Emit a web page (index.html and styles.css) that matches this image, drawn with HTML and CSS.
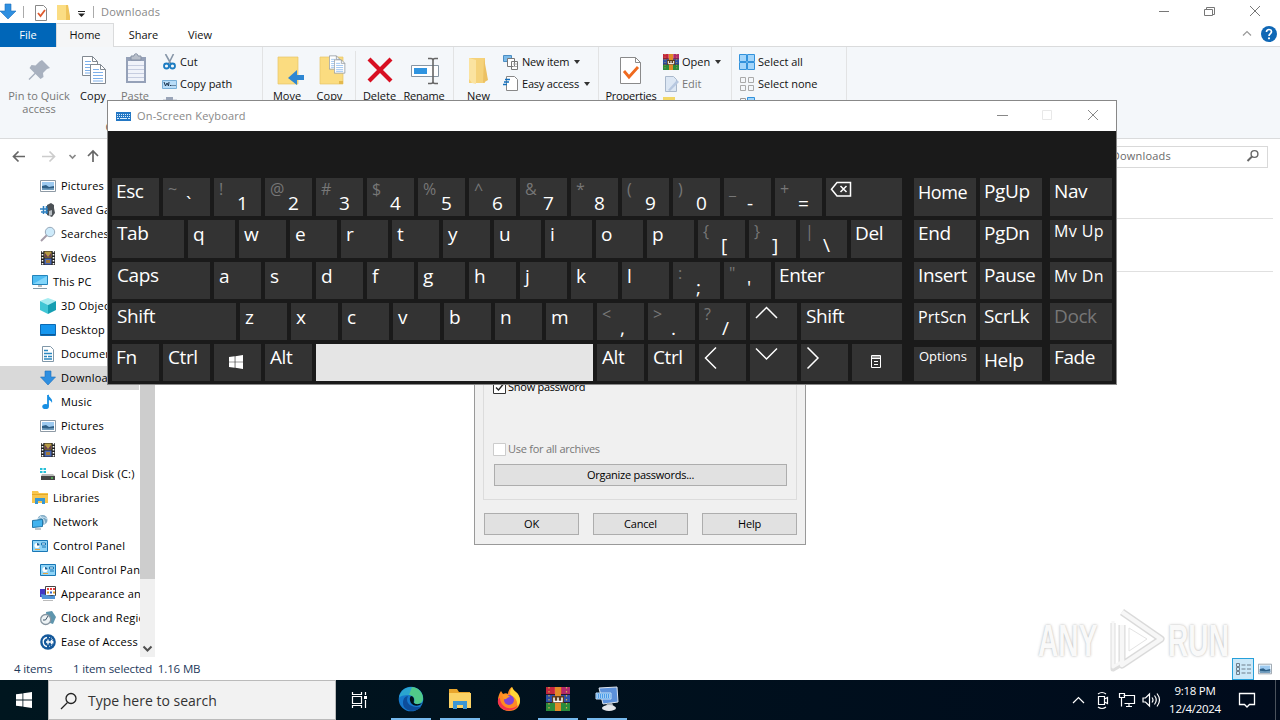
FILE: index.html
```html
<!DOCTYPE html>
<html lang="en">
<head>
<meta charset="utf-8">
<title>Downloads</title>
<link rel="stylesheet" href="styles.css">
</head>
<body>
<svg class="defs" width="0" height="0">
  <defs>
    <symbol id="arrow-down" viewBox="0 0 16 16"><path d="M5 1h6v6h4.500L8 15 .5 7H5z" fill="#2f8fe0" stroke="#1c6fbd" stroke-width=".6"/></symbol>
    <symbol id="picture" viewBox="0 0 16 16"><path d="M.5 2.500h15v11H.5z" fill="#fff" stroke="#8e9aa5"/><path d="M2 4h12v8H2z" fill="#9dcaf0"/><path d="M2 8l4-1 3 2 5-1v4H2z" fill="#2e5f86"/><path d="M2 10l6 .5 6-.5v2H2z" fill="#6f9cbd"/></symbol>
    <symbol id="video" viewBox="0 0 16 16"><path d="M1 1h14v14H1z" fill="#222"/><path d="M4.500 1.500h7v6h-7z" fill="#b69b45"/><path d="M4.500 8.500h7v6h-7z" fill="#4a68b5"/><path d="M5 3l3 4 3-4v4H5z" fill="#6b3d56"/><path d="M6 10h4v3H6z" fill="#a0793b"/><path d="M2.500 1v14M13.500 1v14" stroke="#fff" stroke-width="1.600" stroke-dasharray="1.500 1.500"/></symbol>
    <symbol id="panel" viewBox="0 0 16 16"><path d="M.5 2.500h15v11H.5z" fill="#8fd4f7" stroke="#1977b5"/><circle cx="5" cy="7.500" r="2.600" fill="#fff"/><path d="M5 7.500V4.900a2.600 2.600 0 0 1 2.600 2.600z" fill="#1d5f94"/><path d="M9.500 5h4v2h-4zM10 9h4" stroke="#1977b5" fill="#fff"/><path d="M3 11.500h5" stroke="#e9a33b"/></symbol>
    <symbol id="sheet" viewBox="0 0 30 30"><path d="M.5.5h10l5 5v14H.5z" fill="#fff" stroke="#818991"/><path d="M10.500.5v5h5" fill="none" stroke="#818991"/><path d="M3 5.500h6M3 8.500h10M3 11.500h10M3 14.500h10M3 17h10" stroke="#7db0ea"/></symbol>
    <symbol id="books" viewBox="0 0 24 24"><path d="M0 0h8v8H0z" fill="#c3263e"/><path d="M8 0h8v8H8z" fill="#d2334a"/><path d="M16 0h8v8h-8z" fill="#b02a6d"/><path d="M0 8h24v8H0z" fill="#2d4fa5"/><path d="M0 16h24v8H0z" fill="#2b8b3c"/><path d="M0 7.500h24M0 15.500h24" stroke="#2b1a2c"/><path d="M3 0v24M20.500 0v24" stroke="#d9b04a" stroke-width="1.200" stroke-dasharray="1.500 2.500"/><path d="M9 0h6v24H9z" fill="#e08b28"/><path d="M6 9h12v7H6z" fill="#5e3b1c"/><path d="M8 10.500v4h8v-4M12 10.500v4" stroke="#fff" stroke-width="1.500" fill="none"/></symbol>
    <symbol id="win" viewBox="0 0 16 16"><path d="M0 2.300l6.500-.9v6.200H0zM7.300 1.300L16 0v7.600H7.300zM0 8.400h6.500v6.200L0 13.700zM7.300 8.400H16V16l-8.700-1.300z" fill="#fff"/></symbol>
  </defs>
</svg>

<div class="screen">
  <main class="explorer">
    <header class="titlebar">
      <svg class="quick" width="95" height="22" viewBox="0 0 95 22"><path d="M5 3h6v7h5l-8 8-8-8h5z" fill="#2f8fe0" stroke="#1c6fbd" stroke-width=".6"/><path d="M23.500 5v12" stroke="#aaa"/><path d="M35.500 4.500h8l3 3v12h-11z" fill="#fff" stroke="#888"/><path d="M38 12l2.500 3 4.500-6" fill="none" stroke="#df5a2d" stroke-width="1.800"/><path d="M57 4h11v15H57z" fill="#fbdd83"/><path d="M66 4h2l2 11v4h-4z" fill="#efc45b"/><path d="M78 10.500h7" stroke="#222"/><path d="M78 12.500h7l-3.500 3.500z" fill="#222"/><path d="M93.500 5v12" stroke="#aaa"/></svg>
      <span class="title">Downloads</span>
      <svg class="controls" width="110" height="22" viewBox="0 0 110 22" fill="none" stroke="#777"><path d="M9 10.500h10M56.500 8.500v-2h8v7h-2M54.500 8.500h8v6h-8zM100 5l10 10M110 5l-10 10"/></svg>
    </header>
    <nav class="tabs">
      <span class="tab file">File</span><span class="tab active">Home</span><span class="tab share">Share</span><span class="tab view">View</span>
      <svg class="help" width="36" height="20" viewBox="0 0 36 20"><path d="M1 11.500l4-4 4 4" fill="none" stroke="#999" stroke-width="1.200"/><circle cx="27" cy="10" r="8" fill="#0f67b5"/><path d="M24.500 8c0-3.500 5-3 5-.3 0 1.800-2.500 2-2.500 4.300" fill="none" stroke="#fff" stroke-width="1.700"/><circle cx="27" cy="14.300" r="1.100" fill="#fff"/></svg>
    </nav>
    <section class="ribbon">
      <div class="group clipboard">
        <div class="tools">
          <div class="big pin dim"><svg width="32" height="32" viewBox="0 0 32 32"><path d="M18 7l8 8-3 1-4 4 .5 4-3 2-5-5-6 6-1-1 6-6-5-5 2-3 4 .5 4-4z" fill="#a8b1bf"/></svg><span>Pin to Quick<br>access</span></div>
          <div class="big copy"><svg width="32" height="32" viewBox="0 0 32 32"><use href="#sheet" x="4" y="3" width="30" height="30"/><use href="#sheet" x="12" y="11" width="30" height="30"/></svg><span>Copy</span></div>
          <div class="big paste dim"><svg width="32" height="32" viewBox="0 0 32 32"><path d="M6 4h20v26H6z" fill="#95a1b8"/><path d="M8 8h16v20H8z" fill="#f0f3fa"/><path d="M11 3h3c0-3 4-3 4 0h3v4H11z" fill="#b7bec9" stroke="#8792a5"/><path d="M8 12.500h16M8 16.500h16M8 20.500h16M8 24.500h16" stroke="#c6cde0"/></svg><span>Paste</span></div>
          <ul class="small clip-list">
            <li><svg width="16" height="16" viewBox="0 0 16 16"><path d="M3.500 0l5.500 10M11.500 0L6.500 10" stroke="#8796a8" stroke-width="1.600"/><circle cx="4.500" cy="12" r="2.500" fill="none" stroke="#1c7cc2" stroke-width="1.800"/><circle cx="10.500" cy="12" r="2.500" fill="none" stroke="#1c7cc2" stroke-width="1.800"/></svg>Cut</li>
            <li><svg width="16" height="16" viewBox="0 0 16 16"><path d="M.5 4.500h14v8H.5z" fill="#b8dcf8" stroke="#79afd8"/><path d="M2 6l1.500 4L5 7l1.500 3L7 6M8 9.500h1.500M10.500 9.500h1M12.500 9.500h1" stroke="#1c3550" fill="none"/></svg>Copy path</li>
            <li><svg width="16" height="16" viewBox="0 0 16 16"><path d="M1 2h14v12H1z" fill="#d5d9e1"/><path d="M4 0h7v3H4z" fill="#9aa5b8"/></svg></li>
          </ul>
        </div>
        <span class="caption">Clipboard</span>
      </div>
      <div class="group organize">
        <div class="tools">
          <div class="big move"><svg width="32" height="32" viewBox="0 0 32 32"><path d="M6 4h20v27H6z" fill="#fbdc80" stroke="#e7c467" stroke-width=".7"/><path d="M32 22h-7v-5l-9 8 9 7v-5h7z" fill="#2e87d3"/></svg><span>Move</span></div>
          <div class="big copyto"><svg width="32" height="32" viewBox="0 0 32 32"><path d="M5 4h23v27H5z" fill="#fbdc80" stroke="#e7c467" stroke-width=".7"/><path d="M24 28h4v3h-4z" fill="#e4b94e"/><svg x="14" y="2" width="22" height="23"><use href="#sheet" width="21" height="22"/><use href="#sheet" x="5" y="4" width="21" height="22"/></svg></svg><span>Copy</span></div>
          <i class="line"></i>
          <div class="big delete"><svg width="32" height="32" viewBox="0 0 32 32"><path d="M4 6l22 22M26 6L4 28" stroke="#d80f22" stroke-width="4.200"/></svg><span>Delete</span></div>
          <div class="big rename"><svg width="32" height="32" viewBox="0 0 32 32"><path d="M2.500 12.500h27v11h-27z" fill="#fff" stroke="#8795a3"/><path d="M5 15h13v6H5z" fill="#2f94e0"/><path d="M19 5.500h3q2 0 2 2v21q0 2-2 2h-3M29 5.500h-3q-2 0-2 2M29 30.500h-3q-2 0-2-2" fill="none" stroke="#666" stroke-width="1.600"/></svg><span>Rename</span></div>
        </div>
      </div>
      <div class="group new">
        <div class="tools">
          <div class="big folder"><svg width="32" height="32" viewBox="0 0 32 32"><path d="M5 5h16v25H5z" fill="#f5d27a"/><path d="M5 5l7 2v24l-4-1-3-4z" fill="#fbe3a0"/><path d="M20 5l4 22-5 3z" fill="#ecc163"/></svg><span>New</span></div>
          <ul class="small new-list">
            <li><svg width="16" height="16" viewBox="0 0 16 16"><path d="M.5 1.500h8v6h-8z" fill="#7cbbe9" stroke="#4c8ec4"/><path d="M4.500 4.500h7v8h-7zM8.500 7.500h6v8h-6z" fill="#fff" stroke="#777"/><path d="M10 10h4M10 12.500h4" stroke="#aaa"/></svg>New item<b class="caret"></b></li>
            <li><svg width="16" height="16" viewBox="0 0 16 16"><path d="M3.500.5h8l3 3v11h-11z" fill="#fff" stroke="#888"/><path d="M2 3.500h5M1 6h5M0 8.500h4" stroke="#126fbd" stroke-width="1.500"/></svg>Easy access<b class="caret"></b></li>
          </ul>
        </div>
      </div>
      <div class="group open">
        <div class="tools">
          <div class="big props"><svg width="32" height="32" viewBox="0 0 32 32"><path d="M4.500 4.500h15l5 5v21h-20z" fill="#fff" stroke="#8a8a8a"/><path d="M19.500 4.500v5h5" fill="none" stroke="#8a8a8a"/><path d="M8 18l5 6 9-10" fill="none" stroke="#ef6a1f" stroke-width="2.800"/></svg><span>Properties</span></div>
          <ul class="small open-list">
            <li><svg width="16" height="16"><use href="#books" width="16" height="16"/></svg>Open<b class="caret"></b></li>
            <li class="dim"><svg width="16" height="16" viewBox="0 0 16 16"><path d="M2.500.5h8l3 3v12h-11z" fill="#dce7f4" stroke="#a9b8cb"/><path d="M5 14l9-10 2 2-9 9z" fill="#b7c8e0"/></svg>Edit</li>
            <li><svg width="16" height="16" viewBox="0 0 16 16"><path d="M0 0h12v12H0z" fill="#f2d766"/></svg></li>
          </ul>
        </div>
      </div>
      <div class="group select">
        <ul class="small">
          <li><svg width="16" height="16" viewBox="0 0 16 16"><path d="M.5.5h7v7h-7zM8.500.5h7v7h-7zM.5 8.500h7v7h-7zM8.500 8.500h7v7h-7z" fill="#a3d5fa" stroke="#3292dc"/></svg>Select all</li>
          <li><svg width="16" height="16" viewBox="0 0 16 16" fill="none" stroke="#aaa"><path d="M1.500 1.500h5v5h-5zM9.500 1.500h5v5h-5zM1.500 9.500h5v5h-5zM9.500 9.500h5v5h-5z"/></svg>Select none</li>
          <li><svg width="16" height="16" viewBox="0 0 16 16"><path d="M1.500 1.500h5v5h-5z" fill="none" stroke="#999"/><path d="M8.500.5h7v7h-7z" fill="#a3d5fa" stroke="#3292dc"/></svg></li>
        </ul>
      </div>
    </section>
    <div class="navbar">
      <svg width="107" height="32" viewBox="0 0 107 32" fill="none" stroke-width="1.700"><path d="M25 15.500H13.500M18.500 10.500l-5 5 5 5" stroke="#666"/><path d="M42 15.500h12M49.500 10.500l5 5-5 5" stroke="#ccc"/><path d="M69.500 14l3 3 3-3" stroke="#888"/><path d="M93 21V10M88 15l5-5 5 5" stroke="#666"/></svg>
      <div class="address"></div>
      <div class="search"><span>Search Downloads</span><svg width="14" height="14" viewBox="0 0 14 14" fill="none" stroke="#666"><circle cx="8.500" cy="5" r="3.400" stroke-width="1.400"/><path d="M6 7.500L1.500 12" stroke-width="2"/></svg></div>
    </div>
    <div class="body">
      <aside class="tree">
        <ul>
          <li class="sub"><svg><use href="#picture"/></svg>Pictures</li>
          <li class="sub"><svg viewBox="0 0 16 16"><path d="M7 3l4-2 3 2v3l1 5-3 4-5-2z" fill="#4c5156"/><path d="M9 9l3-1v5l-3 1z" fill="#b8bec3"/><path d="M0 7h8M1 10h7M3.500 4v8M6.500 4v8" stroke="#2c7fc0" stroke-width="1.500"/></svg>Saved Games</li>
          <li class="sub"><svg viewBox="0 0 16 16"><path d="M1 15l6-6" stroke="#a59ba8" stroke-width="2"/><circle cx="10" cy="6" r="4.700" fill="#cdeafa" stroke="#98a9ba"/></svg>Searches</li>
          <li class="sub"><svg><use href="#video"/></svg>Videos</li>
          <li><svg viewBox="0 0 16 16"><path d="M.5 1.500h15v9H.5z" fill="#4fbcf1" stroke="#2384bb"/><path d="M1 10l14-8v8z" fill="#83d6fa"/><path d="M6 11h4v2H6z" fill="#bbb"/><path d="M1 14.500h14" stroke="#8398a5"/></svg>This PC</li>
          <li class="sub"><svg viewBox="0 0 16 16"><path d="M8 0l8 3-8 4-8-4z" fill="#a5ecf1"/><path d="M0 3l8 4v9l-8-4z" fill="#41c6d5"/><path d="M16 3L8 7v9l8-4z" fill="#149eb2"/></svg>3D Objects</li>
          <li class="sub"><svg viewBox="0 0 16 16"><path d="M.5 2.500h15v11H.5z" fill="#1596ee" stroke="#0c6ab3"/><path d="M1 12.500h14" stroke="#0d5a97"/></svg>Desktop</li>
          <li class="sub"><svg viewBox="0 0 16 16"><path d="M2.500.5h8l3 3v12h-11z" fill="#fff" stroke="#8097a8"/><path d="M4 4.500h4M4 7.500h8M4 10.500h3M8 10.500h4M4 13h8" stroke="#2b87bf" stroke-width="1.400"/></svg>Documents</li>
          <li class="sub selected"><svg><use href="#arrow-down"/></svg>Downloads</li>
          <li class="sub"><svg viewBox="0 0 16 16"><path d="M8 1v11" stroke="#188fe3" stroke-width="1.800"/><ellipse cx="5.600" cy="12.500" rx="3.300" ry="2.600" fill="#188fe3"/><path d="M8 0c1 4 5 4 4 9-1-3-4-3-4-4z" fill="#188fe3"/></svg>Music</li>
          <li class="sub"><svg><use href="#picture"/></svg>Pictures</li>
          <li class="sub"><svg><use href="#video"/></svg>Videos</li>
          <li class="sub"><svg viewBox="0 0 16 16"><path d="M0 2h2.500v2H0zM3.500 2H6v2H3.500zM0 5h2.500v2H0zM3.500 5H6v2H3.500z" fill="#26c0d8"/><path d="M2 8h11l2 2H1z" fill="#bbb"/><path d="M1 10h14v4H1z" fill="#444"/><path d="M11 12h2" stroke="#6f6"/></svg>Local Disk (C:)</li>
          <li><svg viewBox="0 0 16 16"><path d="M0 1h6l1 2h9v10H0z" fill="#f8c64d"/><path d="M3 14V8h10v6h-3v-3H6v3z" fill="#3897d3"/><path d="M0 4.500h16" stroke="#e5a927"/></svg>Libraries</li>
          <li><svg viewBox="0 0 16 16"><circle cx="10.500" cy="6" r="5" fill="#7faac5"/><path d="M6 5q4-4 9 0M8 2q5 3 5 8" stroke="#cde5f3" fill="none"/><path d="M.5 6.500l10-1v7l-10 1z" fill="#43b3ee" stroke="#2477a8"/><path d="M3 15h6" stroke="#7b8b96"/></svg>Network</li>
          <li><svg><use href="#panel"/></svg>Control Panel</li>
          <li class="sub"><svg><use href="#panel"/></svg>All Control Panel Items</li>
          <li class="sub"><svg viewBox="0 0 16 16"><path d="M0 3h8v8H0z" fill="#4338c4"/><path d="M5.500.5h10v9h-10z" fill="#fff" stroke="#444"/><path d="M7 3h2M10 3h2M13 3h2" stroke="#e63c3c" stroke-width="2"/><path d="M7 6.500h2M13 6.500h2" stroke="#e5a32d" stroke-width="2"/><path d="M10 6.500h2" stroke="#3864cb" stroke-width="2"/><path d="M1 8l11 2 3-1v4H2z" fill="#4f93d7"/><path d="M3 14.500h10" stroke="#bbb"/></svg>Appearance and Personalization</li>
          <li class="sub"><svg viewBox="0 0 16 16"><path d="M6 2l6-1 4 6-3 7-6-2z" fill="#5e95ad"/><circle cx="5.700" cy="9.500" r="5" fill="#eef3f5" stroke="#8695a0" stroke-width="1.300"/><path d="M8 6L5.500 10H3" stroke="#3f566a" fill="none"/></svg>Clock and Region</li>
          <li class="sub"><svg viewBox="0 0 16 16"><circle cx="8" cy="8" r="7.800" fill="#14589b"/><path d="M7 3.500C1 5 3 12 7 12.500M6 8h7M8 5.500v5M11 6l2 2-2 2" stroke="#fff" fill="none" stroke-width="1.300"/><path d="M9 12.500q3-1 4-3M9 3.500q3 0 4 3" stroke="#fff" fill="none" stroke-dasharray="1 1"/></svg>Ease of Access</li>
        </ul>
        <div class="scroll"><div class="thumb"></div><svg width="15" height="16" viewBox="0 0 15 16"><path d="M3.500 5.500l4 4 4-4" fill="none" stroke="#505050" stroke-width="2"/></svg></div>
      </aside>
      <section class="files"><div class="rule"></div><div class="rule second"></div></section>
    </div>
    <footer class="status">
      <span class="count">4 items</span><span class="picked">1 item selected&nbsp; 1.16 MB</span>
      <div class="views"><i class="mode on"><svg width="20" height="20" viewBox="0 0 20 20" stroke="#6f7f8c" fill="none"><path d="M3.500 4.500h3v3h-3zM3.500 8.500h3v3h-3zM3.500 12.500h3v3h-3zM8.500 6h4M14 6h4M8.500 10h4M14 10h4M8.500 14h4M14 14h4"/></svg></i><svg class="mode" width="15" height="16"><use href="#picture" width="14" height="16"/></svg></div>
    </footer>
  </main>

  <section class="dialog">
    <div class="frame">
      <label class="check show"><svg width="13" height="13" viewBox="0 0 13 13"><path d="M.5.5h12v12H.5z" fill="#fff" stroke="#333"/><path d="M3 6.500L5.500 9 10 3.500" fill="none" stroke="#222" stroke-width="1.300"/></svg>Show password</label>
      <label class="check all"><svg width="13" height="13" viewBox="0 0 13 13"><path d="M.5.5h12v12H.5z" fill="#fff" stroke="#ccc"/></svg>Use for all archives</label>
      <div class="btn">Organize passwords...</div>
    </div>
    <div class="actions"><div class="btn">OK</div><div class="btn">Cancel</div><div class="btn">Help</div></div>
  </section>

  <section class="osk">
    <header class="osk-title">
      <svg width="15" height="9" viewBox="0 0 15 9"><path d="M0 0h15v9H0z" fill="#2377c4"/><path d="M1 2.500h13M1 4.500h13" stroke="#d9ecfb" stroke-dasharray="1 1"/><path d="M1 6.500h2M4 6.500h7M12 6.500h2" stroke="#d9ecfb"/></svg>
      <span>On-Screen Keyboard</span>
      <svg class="osk-controls" width="102" height="12" viewBox="0 0 102 12" fill="none"><path d="M0 5.500h11" stroke="#888"/><path d="M45.500.5h9v9h-9z" stroke="#e8e8e8"/><path d="M91 0l10 10M101 0L91 10" stroke="#888"/></svg>
    </header>
    <div class="keys">
      <div class="board">
        <div class="row">
          <div class="key">Esc</div>
          <div class="key dual"><i>~</i><b>`</b></div><div class="key dual"><i>!</i><b>1</b></div><div class="key dual"><i>@</i><b>2</b></div><div class="key dual"><i>#</i><b>3</b></div><div class="key dual"><i>$</i><b>4</b></div><div class="key dual"><i>%</i><b>5</b></div><div class="key dual"><i>^</i><b>6</b></div><div class="key dual"><i>&amp;</i><b>7</b></div><div class="key dual"><i>*</i><b>8</b></div><div class="key dual"><i>(</i><b>9</b></div><div class="key dual"><i>)</i><b>0</b></div><div class="key dual"><i>_</i><b>-</b></div><div class="key dual"><i>+</i><b>=</b></div>
          <div class="key rest"><svg width="22" height="22" viewBox="0 0 22 22" fill="none" stroke="#fff" stroke-width="1.500"><path d="M7 4.500h13.500v13.500H7L1.500 11.200zM10.500 8l6 6M16.500 8l-6 6"/></svg></div>
        </div>
        <div class="row">
          <div class="key word tabkey">Tab</div><div class="key letter">q</div><div class="key letter">w</div><div class="key letter">e</div><div class="key letter">r</div><div class="key letter">t</div><div class="key letter">y</div><div class="key letter">u</div><div class="key letter">i</div><div class="key letter">o</div><div class="key letter">p</div><div class="key dual"><i>{</i><b>[</b></div><div class="key dual"><i>}</i><b>]</b></div><div class="key dual"><i>|</i><b>\</b></div><div class="key rest">Del</div>
        </div>
        <div class="row short">
          <div class="key word caps">Caps</div><div class="key letter">a</div><div class="key letter">s</div><div class="key letter">d</div><div class="key letter">f</div><div class="key letter">g</div><div class="key letter">h</div><div class="key letter">j</div><div class="key letter">k</div><div class="key letter">l</div><div class="key dual"><i>:</i><b>;</b></div><div class="key dual"><i>"</i><b>'</b></div><div class="key rest">Enter</div>
        </div>
        <div class="row short">
          <div class="key word shift">Shift</div><div class="key letter">z</div><div class="key letter">x</div><div class="key letter">c</div><div class="key letter">v</div><div class="key letter">b</div><div class="key letter">n</div><div class="key letter">m</div><div class="key dual"><i>&lt;</i><b>,</b></div><div class="key dual"><i>&gt;</i><b>.</b></div><div class="key dual"><i>?</i><b>/</b></div>
          <div class="key"><svg width="24" height="22" viewBox="0 0 24 22" fill="none" stroke="#fff" stroke-width="1.500"><path d="M2 15L12.500 4.500 23 15"/></svg></div><div class="key word rest">Shift</div>
        </div>
        <div class="row short">
          <div class="key">Fn</div><div class="key word">Ctrl</div><div class="key glyph"><svg width="14" height="14"><use href="#win"/></svg></div><div class="key word">Alt</div><div class="key space"></div><div class="key word">Alt</div><div class="key word">Ctrl</div>
          <div class="key"><svg width="24" height="28" viewBox="0 0 24 28" fill="none" stroke="#fff" stroke-width="1.500"><path d="M13 3.500L2.500 14 13 24.500"/></svg></div><div class="key"><svg width="24" height="22" viewBox="0 0 24 22" fill="none" stroke="#fff" stroke-width="1.500"><path d="M2 4.500L12.500 15 23 4.500"/></svg></div><div class="key"><svg width="24" height="28" viewBox="0 0 24 28" fill="none" stroke="#fff" stroke-width="1.500"><path d="M2.500 3.500L13 14 2.500 24.500"/></svg></div>
          <div class="key rest glyph"><svg width="10" height="13" viewBox="0 0 10 13" fill="none" stroke="#fff"><path d="M.5.5h9v12h-9zM.5 2h9M.5 3.500h9M3 6.500h4M3 9.500h4"/></svg></div>
        </div>
      </div>
      <div class="side">
        <div class="key home">Home</div><div class="key">PgUp</div><div class="key">Nav</div>
        <div class="key">End</div><div class="key">PgDn</div><div class="key mv">Mv Up</div>
        <div class="key">Insert</div><div class="key">Pause</div><div class="key mv dn">Mv Dn</div>
        <div class="key prt">PrtScn</div><div class="key scr">ScrLk</div><div class="key dock">Dock</div>
        <div class="key low options">Options</div><div class="key low">Help</div><div class="key">Fade</div>
      </div>
    </div>
  </section>

  <div class="watermark"><span>ANY</span><svg width="64" height="68" viewBox="0 0 64 68"><g fill="none" stroke-linejoin="round"><path d="M18 5L57 32 18 58V18" stroke="#d2d2d2" stroke-width="7"/><path d="M9 16V62l12-7" stroke="#d6d6d6" stroke-width="5"/><path d="M18 5L57 32 18 58V18" stroke="#f6f6f6" stroke-width="4.500"/><path d="M9 14V60l10-6" stroke="#f6f6f6" stroke-width="3"/><path d="M25 21v23l18-12z" stroke="#ddd"/></g></svg><span>RUN</span></div>

  <footer class="taskbar">
    <div class="start"><svg width="16" height="16"><use href="#win"/></svg></div>
    <div class="find"><svg width="18" height="18" viewBox="0 0 18 18" fill="none" stroke="#222" stroke-width="1.300"><circle cx="11" cy="6.500" r="5"/><path d="M7.500 10.500L1 17"/></svg><span>Type here to search</span></div>
    <div class="app task"><svg width="18" height="18" viewBox="0 0 18 18" fill="none" stroke="#fff" stroke-width="1.200"><path d="M1.500 1v2.500h9V1M1.500 5.500h9v7h-9zM1.500 17v-2.500h9V17M14.500 1v3M14.500 9v8"/><path d="M13 5h3v3h-3z" fill="#fff" stroke="none"/></svg></div>
    <div class="app run"><svg width="26" height="26" viewBox="0 0 26 26"><circle cx="13" cy="13" r="12.300" fill="#1678cc"/><path d="M1 12C3-2 23-3 25 12c.5 7-7 7-9 5 2-4-1-8-5-8-5 0-9 1-10 3z" fill="#2aa5d0"/><path d="M14 1c8 1 11 7 11 11 0 6-6 7-9 5 2-4-1-8-5-8z" fill="#5bd377" opacity=".8"/><path d="M10 10c-3 6 1 12 13 11-5 6-18 5-18-4 0-4 2-7 5-7z" fill="#0d4d9b"/><path d="M13 10c5 1 2 6 3 7 2 2 6 1 8 0-3 4-9 3-11 0-1-2-2-5 0-7z" fill="#001018"/></svg></div>
    <div class="app run"><svg width="24" height="24" viewBox="0 0 24 24"><path d="M1 2h8l2 3h11v16H1z" fill="#e9a52c"/><path d="M1 6h22v15H1z" fill="#fbd265"/><path d="M5 22v-8h14v8h-4v-4H9v4z" fill="#3b96d4"/></svg></div>
    <div class="app"><svg width="24" height="26" viewBox="0 0 24 26"><path d="M4 5l2 3c2-1 4-1 5 0 0-3 2-6 4-7 1 3 3 4 5 6 6 7 3 18-8 18S-2 14 4 5z" fill="#ff8a22"/><path d="M15 1c1 3 3 4 5 6 4 5 4 10 0 14 1-5-1-9-5-11-3-2-2-6 0-9z" fill="#ffd637"/><path d="M3 12c0 9 11 14 18 7-3 7-17 8-20-2-.5-2 0-5 2-5z" fill="#f5334e"/><circle cx="12" cy="14" r="5" fill="#8043d6"/><path d="M5 9c4-2 6 0 8 2-3 0-3 3-6 2z" fill="#ff9927"/></svg></div>
    <div class="app run"><svg width="24" height="24"><use href="#books"/></svg></div>
    <div class="app run"><svg width="24" height="26" viewBox="0 0 24 26"><path d="M4 2l18-1 1 15-15 2z" fill="#5c91da" stroke="#e0e7f0"/><path d="M1 7h15v6H1z" fill="#4b9ce8" stroke="#c5e0f8"/><path d="M2 9h13M2 11h13" stroke="#fff" stroke-dasharray="1 1"/><path d="M12 17h5l2 4h-8z" fill="#aab1b8"/><ellipse cx="14" cy="22" rx="7" ry="3" fill="#e2e5e9"/></svg></div>
    <div class="tray">
      <svg width="90" height="20" viewBox="0 0 90 20" fill="none" stroke="#fff" stroke-width="1.200"><path d="M2 13l5.500-5.500L13 13M27.500 6.500h6v8h-6zM33.500 9l3-1.500v6l-3-1.500M27 4q4-3 8 0M27 17q4 3 8 0"/><path d="M52.500 5.500h11v8h-10M55 16.500h6M58 13.500v3M48.500 3.500h5v4h-5zM50.500 7.500v9"/><path d="M72 8h2.500L78.500 4v12l-4-4H72zM81 7.500q2 2.500 0 5M83.500 5.500q3.500 4.500 0 9M86 3.500q5 6.500 0 13"/></svg>
      <div class="clock">9:18 PM<br>12/4/2024</div>
      <svg width="18" height="18" viewBox="0 0 18 18" fill="none" stroke="#fff" stroke-width="1.300"><path d="M1.500 2.500h15v11h-5L9 16l-2.500-2.500h-5z"/></svg>
      <i class="peek"></i>
    </div>
  </footer>
</div>
</body>
</html>
```
FILE: styles.css
```css
* { box-sizing: border-box; }
body { margin: 0; font: 11px/14px "Open Sans", "Noto Sans", sans-serif; color: #111; background: #fff; }
ul { list-style: none; margin: 0; padding: 0; }
svg { display: block; flex: none; }
i, b { font-style: normal; font-weight: 400; }
.defs { position: absolute; }
.screen { position: relative; width: 1280px; height: 720px; overflow: hidden; display: flex; flex-direction: column; }

.explorer { height: 680px; display: flex; flex-direction: column; }
.titlebar { height: 23px; display: flex; align-items: center; padding-right: 20px; }
.title { margin-left: 6px; color: #888; letter-spacing: .2px; }
.controls { margin-left: auto; overflow: visible; }
.tabs { height: 24px; display: flex; align-items: stretch; border-bottom: 1px solid #dadbdc; }
.tab { text-align: center; line-height: 24px; margin-bottom: -1px; }
.file { width: 56px; background: #0066b8; color: #fff; }
.active { width: 58px; background: #f5f6f7; border: solid #dadbdc; border-width: 1px 1px 0; line-height: 22px; }
.share { width: 59px; }
.view { width: 54px; }
.help { margin: 1px 0 0 auto; width: 38px; padding-right: 2px; }

.ribbon { height: 92px; display: flex; background: #f4f7fa; border-bottom: 1px solid #dadbdc; }
.group { display: flex; flex-direction: column; border-right: 1px solid #e2e3e4; padding-top: 4px; margin-bottom: 4px; }
.clipboard { width: 263px; }
.organize { width: 191px; padding-left: 3px; }
.new { width: 145px; }
.open { width: 133px; }
.select { width: 115px; padding-left: 7px; }
.tools { display: flex; height: 72px; }
.caption { text-align: center; color: #555; letter-spacing: .1px; }
.big { display: flex; flex-direction: column; align-items: center; text-align: center; white-space: nowrap; gap: 4px; line-height: 13px; }
.big > svg { margin: 2px 0 0 2px; }
.dim { color: #777; }
.pin { width: 78px; }
.copy { width: 30px; }
.paste { width: 54px; }
.move { width: 42px; }
.copyto { width: 43px; }
.line { width: 1px; margin-left: 4px; background: #e2e3e4; }
.delete { width: 47px; }
.rename { width: 42px; letter-spacing: -.2px; margin-right: 1px; }
.folder { width: 49px; }
.props { width: 64px; letter-spacing: -.2px; }
.small li { height: 22px; display: flex; align-items: center; gap: 3px; white-space: nowrap; }
.small li:nth-child(3) svg { margin-top: -2px; }
.clip-list li { gap: 2px; }
.new-list li { letter-spacing: -.2px; }
.caret { border: solid transparent; border-width: 4px 3.500px 0; border-top-color: #333; margin-left: 2px; }

.navbar { height: 35px; display: flex; align-items: center; }
.address { width: 980px; height: 23px; border: 1px solid #d9d9d9; }
.search { width: 193px; margin-left: -12px; height: 22px; border: 1px solid #d9d9d9; display: flex; align-items: center; justify-content: space-between; padding: 0 7px 2px 0; color: #6a6a6a; }
.search span { width: 95px; direction: rtl; white-space: nowrap; letter-spacing: .2px; }
.body { height: 483px; display: flex; color: #000; }
.tree { width: 156px; display: flex; }
.tree ul { width: 140px; overflow: hidden; letter-spacing: .22px; }
.tree li { height: 24px; padding-left: 32px; display: flex; align-items: center; gap: 5px; white-space: nowrap; }
.tree li.sub { padding-left: 40px; }
.tree li svg { width: 16px; height: 16px; }
.tree .selected { background: #d9d9d9; width: 139px; }
.scroll { width: 15px; background: #f0f0f0; display: flex; flex-direction: column; justify-content: space-between; }
.thumb { height: 405px; background: #cdcdcd; }
.files { flex: 1; padding: 44px 7px 0 0; }
.rule { border-top: 1px solid #e0e0e0; }
.second { margin-top: 52px; }
.status { height: 23px; display: flex; align-items: center; color: #1e395b; padding-left: 14px; font-size: 11.500px; letter-spacing: -.13px; }
.count { width: 59px; }
.views { margin-left: auto; display: flex; align-items: center; gap: 4px; padding-right: 7px; }
.on { width: 22px; height: 22px; border: 1px solid #26a0da; background: #cce8f8; }

.dialog { position: absolute; left: 474px; top: 330px; width: 332px; height: 215px; background: #f0f0f0; border: 1px solid #999; padding: 0 8px; color: #000; }
.frame { height: 169px; border: 1px solid #dcdcdc; padding: 48px 11px 0 9px; letter-spacing: -.25px; }
.check { display: flex; align-items: center; gap: 2px; height: 14px; }
.all { color: #777; margin: 48px 0 8px; }
.btn { height: 22px; border: 1px solid #adadad; background: #e1e1e1; text-align: center; line-height: 20px; }
.frame .btn { width: 293px; margin-left: 1px; }
.actions { display: grid; grid-template-columns: 95px 95px 95px; justify-content: space-between; padding: 13px 0 0 1px; letter-spacing: -.2px; }

.osk { position: absolute; left: 107px; top: 100px; width: 1010px; height: 285px; border: 1px solid #888; background: #1a1a1a; }
.osk-title { height: 30px; background: #fff; display: flex; align-items: center; padding: 0 17px 0 8px; color: #888; }
.osk-title span { margin-left: 6px; letter-spacing: .17px; }
.osk-controls { margin-left: auto; }
.keys { display: flex; gap: 12px; padding: 47px 0 0 4px; }
.board { width: 790px; display: flex; flex-direction: column; gap: 4px; }
.row { display: flex; gap: 4px; height: 38px; }
.short { height: 37px; }
.key { width: 47px; background: #333; color: #fff; font-size: 19px; line-height: 26px; padding-left: 4px; white-space: nowrap; letter-spacing: -.4px; overflow: hidden; }
.key.rest { width: auto; flex: 1; }
.word { padding-left: 5px; }
.tabkey { width: 72px; }
.caps { width: 98px; }
.shift { width: 124px; }
.space { width: 277px; background: #e5e5e5; }
.letter { padding-left: 5px; line-height: 28px; }
.dual { display: flex; padding-left: 5px; letter-spacing: 0; }
.dual i { width: 18px; color: #777; font-size: 16px; line-height: 23px; }
.dual b { line-height: 50px; }
.glyph { display: flex; align-items: center; justify-content: center; padding: 0 3px 2px 0; }
.side { display: grid; grid-template-columns: 66px 70px 62px; grid-template-rows: 38px 38px 37px 37px 37px; row-gap: 4px; }
.side .key { width: 62px; }
.low { margin-top: 3px; }
.home { font-size: 18px; line-height: 28px; }
.mv { font-size: 16px; line-height: 23px; letter-spacing: .4px; }
.dn { line-height: 29px; }
.prt { font-size: 16px; line-height: 28px; letter-spacing: .1px; }
.options { font-size: 13px; line-height: 19px; letter-spacing: 0; padding-left: 5px; }
.dock { color: #777; }

.watermark { position: absolute; left: 1038px; top: 607px; display: flex; align-items: center; font: bold 44px/56px "Liberation Sans", sans-serif; color: #f8f8f8; text-shadow: 0 0 3px #999; opacity: .8; }
.watermark span { width: 66px; transform: scaleX(.64); transform-origin: 0 50%; }

.taskbar { height: 40px; background: linear-gradient(90deg, #00161f, #000b1c); display: flex; color: #fff; }
.start { width: 48px; display: grid; place-items: center; }
.find { width: 288px; background: #f2f2f2; border: 1px solid #bbb; display: flex; align-items: center; padding: 2px 0 0 11px; gap: 10px; color: #333; font-size: 14px; }
.app { width: 40px; margin-right: 9px; display: grid; place-items: center; border-bottom: 2px solid transparent; }
.task { margin-left: 4px; margin-right: 11px; padding-top: 2px; }
.run { border-color: #76b9ed; }
.tray { margin-left: auto; display: flex; align-items: center; }
.clock { width: 74px; text-align: center; font-size: 11.500px; line-height: 18px; letter-spacing: -.3px; margin: 0 6px 0 -3px; }
.peek { height: 40px; border-left: 1px solid #4a525c; width: 5px; margin-left: 19px; }
```
